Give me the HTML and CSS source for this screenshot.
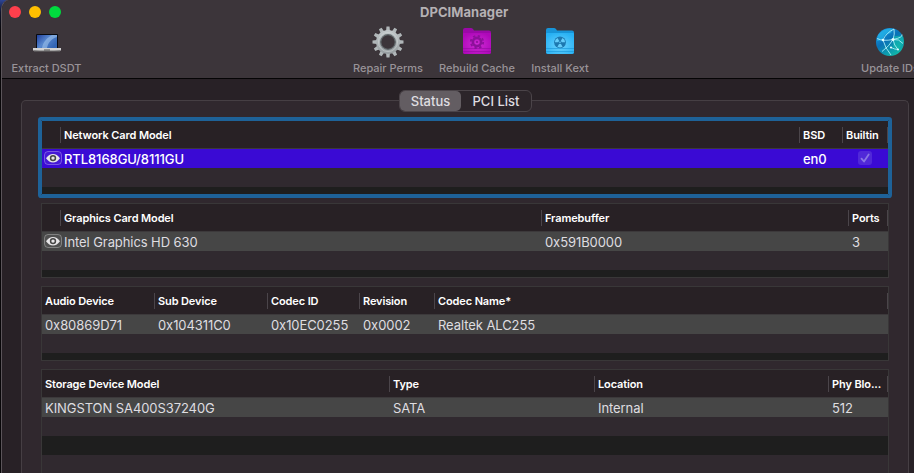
FILE: index.html
```html
<!DOCTYPE html>
<html lang="en">
<head>
<meta charset="utf-8">
<title>DPCIManager</title>
<link rel="stylesheet" href="styles.css">
</head>
<body>
<svg class="defs" aria-hidden="true">
  <symbol id="eye" viewBox="0 0 18 14">
    <rect x=".5" y=".5" width="17" height="13" rx="3.5" fill="#fff" fill-opacity=".06" stroke="#fff" stroke-opacity=".3"/>
    <path d="M2 7.200C4 4.300 6.300 2.900 9 2.900s5 1.400 7 4.300C14 10 11.700 11.400 9 11.400S4 10 2 7.200Z" fill="#e8e6e8"/>
    <circle cx="9" cy="7.100" r="3.200" class="eye-ring"/>
    <circle cx="9" cy="7.100" r="1.700" fill="#e8e6e8"/>
  </symbol>
</svg>
<div class="window">
  <header class="titlebar">
    <div class="lights"><i class="close"></i><i class="minimize"></i><i class="zoom"></i></div>
    <h1><span>DPCIManager</span></h1>
    <nav class="toolbar">
      <div class="tool extract">
        <svg width="30" height="30" viewBox="0 0 30 30">
          <defs><linearGradient id="screen" x1="0" y1="0" x2="1" y2=".6"><stop offset="0" stop-color="#203f9c"/><stop offset=".5" stop-color="#5787ce"/><stop offset="1" stop-color="#3265b5"/></linearGradient></defs>
          <rect x="4" y="7" width="22" height="15" rx="1" fill="#080a10"/>
          <rect x="5" y="8" width="20" height="13" fill="url(#screen)"/>
          <path d="M10 21C11 15 15 11 20 8h5v2c-6 2-9 6-10 11Z" fill="#a5c9ee" opacity=".55"/>
          <path d="M1 21h28v2.500q-14 1-28 0Z" fill="#d3d3d3"/><path d="M2 23.500h26v1H2Z" fill="#737273"/><path d="M12 22.500h6v1h-6Z" fill="#555"/>
        </svg>
        <span>Extract DSDT</span>
      </div>
      <div class="tool repair">
        <svg width="32" height="32" viewBox="0 0 32 32">
          <defs><linearGradient id="steel" x1="0" y1="0" x2="0" y2="1"><stop offset="0" stop-color="#c2c8ca"/><stop offset="1" stop-color="#969da0"/></linearGradient></defs>
          <g fill="#b0b6b8">
            <path d="M14 5 14.500.5h3L18 5v22l-.5 4.500h-3L14 27Z" transform="rotate(0 16 16)"/>
            <path d="M14 5 14.500.5h3L18 5v22l-.5 4.500h-3L14 27Z" transform="rotate(30 16 16)"/>
            <path d="M14 5 14.500.5h3L18 5v22l-.5 4.500h-3L14 27Z" transform="rotate(60 16 16)"/>
            <path d="M14 5 14.500.5h3L18 5v22l-.5 4.500h-3L14 27Z" transform="rotate(90 16 16)"/>
            <path d="M14 5 14.500.5h3L18 5v22l-.5 4.500h-3L14 27Z" transform="rotate(120 16 16)"/>
            <path d="M14 5 14.500.5h3L18 5v22l-.5 4.500h-3L14 27Z" transform="rotate(150 16 16)"/>
          </g>
          <circle cx="16" cy="16" r="12" fill="url(#steel)"/>
          <circle cx="16" cy="16" r="7.300" fill="#3c353a" stroke="#61686b" stroke-width="1.300"/>
          <circle cx="16" cy="16" r="9.600" fill="none" stroke="#d8dddd" stroke-width=".8" opacity=".6"/>
        </svg>
        <span>Repair Perms</span>
      </div>
      <div class="tool rebuild">
        <svg width="32" height="32" viewBox="0 0 32 32">
          <defs><radialGradient id="magenta" cx=".5" cy=".55" r=".6"><stop offset="0" stop-color="#cf2bd4"/><stop offset="1" stop-color="#ae08b9"/></radialGradient></defs>
          <path d="M2 4q0-2 2-2h6q1 0 2 1l1 1.500h15q2 0 2 2V26q0 2-2 2H4q-2 0-2-2Z" fill="#9b08a8"/>
          <path d="M2 8q0-1 1-1h26q1 0 1 1v18q0 2-2 2H4q-2 0-2-2Z" fill="url(#magenta)"/>
          <path d="M2 22.500h28M2 25.500h28" stroke="#900b9d" stroke-width=".6"/>
          <g fill="none" stroke="#8c109a"><circle cx="16" cy="16" r="4.100" stroke-width="2.600"/><circle cx="16" cy="16" r="6.200" stroke-width="1.800" stroke-dasharray="2.400 2.470"/></g>
          <circle cx="16" cy="16" r="1.100" fill="#8c109a"/>
        </svg>
        <span>Rebuild Cache</span>
      </div>
      <div class="tool install">
        <svg width="32" height="32" viewBox="0 0 32 32">
          <defs><radialGradient id="azure" cx=".5" cy=".6" r=".65"><stop offset="0" stop-color="#6bd3ff"/><stop offset="1" stop-color="#26b0f3"/></radialGradient></defs>
          <path d="M2 4q0-2 2-2h6q1 0 2 1l1 1.500h15q2 0 2 2V26q0 2-2 2H4q-2 0-2-2Z" fill="#1794d8"/>
          <path d="M2 8q0-1 1-1h26q1 0 1 1v18q0 2-2 2H4q-2 0-2-2Z" fill="url(#azure)"/>
          <path d="M2 22.500h28M2 25.500h28" stroke="#1593d6" stroke-width=".6"/>
          <circle cx="16" cy="16.300" r="5.900" fill="#1d78b0"/>
          <g fill="#67cdfa"><path d="M16 16.300 10.900 16.300A5.100 5.100 0 0 1 13.450 11.900Z"/><path d="M16 16.300 18.550 11.900A5.100 5.100 0 0 1 21.100 16.300Z"/><path d="M16 16.300 18.550 20.700A5.100 5.100 0 0 1 13.450 20.700Z"/></g>
          <circle cx="16" cy="16.300" r="1.600" fill="#1d78b0"/><circle cx="16" cy="16.300" r=".8" fill="#67cdfa"/>
        </svg>
        <span>Install Kext</span>
      </div>
      <div class="tool update">
        <svg width="32" height="32" viewBox="0 0 32 32">
          <defs><linearGradient id="globe" x1="0" y1="0" x2=".7" y2="1"><stop offset="0" stop-color="#1fa2ec"/><stop offset=".48" stop-color="#0871b7"/><stop offset="1" stop-color="#10b9a7"/></linearGradient></defs>
          <circle cx="16" cy="16" r="14" fill="url(#globe)"/>
          <path d="M4 9q7-8 15-6l-2 4-6 2-3 5-5 1Z" fill="#29c0ee" opacity=".6"/>
          <path d="M20 10l9 0 1 6-6 8-5-3Z" fill="#12c5ae" opacity=".5"/>
          <g fill="none" stroke="#baf8ff" stroke-width="1" opacity=".8"><path d="M3 12.500q6 3 16 1t9-5M9 14Q12 7 20 3M19 13.500Q21 8 20 3M9 14q2 8 8 15M19 13.500q-3 6-11 12M19 13.500q1 6 5 10M17 21.500q4 2 7 2M19 13.500q6-1 10 4"/></g>
          <g fill="#e2ffff"><circle cx="9" cy="14" r="1.300"/><circle cx="19" cy="13.500" r="1.500"/><circle cx="17" cy="21.500" r="1.100"/><circle cx="24" cy="23.500" r="1"/></g>
        </svg>
        <span>Update IDs</span>
      </div>
    </nav>
  </header>
  <main class="panel">
    <div class="tabs"><b class="active"><span>Status</span></b><b><span>PCI List</span></b></div>
    <section class="table network focused">
      <div class="row head"><div></div><div><span>Network Card Model</span></div><div><span>BSD</span></div><div><span>Builtin</span></div></div>
      <div class="row data"><div class="eye"><svg width="18" height="14"><use href="#eye"/></svg></div><div><span>RTL8168GU/8111GU</span></div><div><span>en0</span></div>
        <div class="check"><svg width="14" height="14" viewBox="0 0 14 14"><rect width="14" height="14" rx="3" fill="#5028d8"/><path d="M3.500 7.600 6 10.500l4.700-7" fill="none" stroke="#8a75e4" stroke-width="1.800" stroke-linecap="round" stroke-linejoin="round"/></svg></div></div>
    </section>
    <section class="table graphics">
      <div class="row head"><div></div><div><span>Graphics Card Model</span></div><div><span>Framebuffer</span></div><div><span>Ports</span></div></div>
      <div class="row data"><div class="eye"><svg width="18" height="14"><use href="#eye"/></svg></div><div><span>Intel Graphics HD 630</span></div><div><span>0x591B0000</span></div><div><span>3</span></div></div>
    </section>
    <section class="table audio">
      <div class="row head"><div><span>Audio Device</span></div><div><span>Sub Device</span></div><div><span>Codec ID</span></div><div><span>Revision</span></div><div><span>Codec Name*</span></div></div>
      <div class="row data"><div><span>0x80869D71</span></div><div><span>0x104311C0</span></div><div><span>0x10EC0255</span></div><div><span>0x0002</span></div><div><span>Realtek ALC255</span></div></div>
    </section>
    <section class="table storage">
      <div class="row head"><div><span>Storage Device Model</span></div><div><span>Type</span></div><div><span>Location</span></div><div><span>Phy Blo...</span></div></div>
      <div class="row data"><div><span>KINGSTON SA400S37240G</span></div><div><span>SATA</span></div><div><span>Internal</span></div><div><span>512</span></div></div>
    </section>
  </main>
</div>
</body>
</html>
```

FILE: styles.css
```css
* { box-sizing: border-box; }
html, body { margin: 0; height: 100%; overflow: hidden; }
body {
  padding-left: 1px;
  background: linear-gradient(#2d4596 0, #10142c 12px, #080608 30px);
  font-family: Inter, "Liberation Sans", sans-serif;
  color: #dfdde0;
}
.defs { position: absolute; width: 0; height: 0; }
.window {
  display: flex;
  flex-direction: column;
  width: 925px;
  height: 474px;
  border: 1px solid #5b555a;
  border-top-color: #4e474c;
  border-bottom: 0;
  border-radius: 10px 10px 0 0;
  background: #282126;
  overflow: hidden;
  margin-top: -1px;
}
.titlebar {
  flex: none;
  display: grid;
  grid-template-columns: 100px 724px;
  grid-template-rows: 24px 54px;
  height: 79px;
  background: #3c353a;
  border-bottom: 1px solid #050405;
}
.lights { display: flex; gap: 8px; padding: 6px 0 0 7px; }
.lights i { width: 12px; height: 12px; border-radius: 50%; }
.close { background: #ff3f4c; }
.minimize { background: #ffbf00; }
.zoom { background: #00db3e; }
h1 {
  margin: 0;
  padding-left: 318px;
  font-size: 13px;
  line-height: 24px;
  font-weight: 700;
  letter-spacing: .06px;
  color: #b5b1b4;
}
.toolbar {
  grid-column: 1 / 3;
  width: 960px;
  display: grid;
  grid-template-columns: 89px 250px 94px 84px 82px 244px 90px;
  grid-template-areas: "extract . repair rebuild install . update";
}
.extract { grid-area: extract; }
.repair { grid-area: repair; }
.rebuild { grid-area: rebuild; }
.install { grid-area: install; }
.update { grid-area: update; }
.tool {
  display: flex;
  flex-direction: column;
  align-items: center;
  height: 54px;
  padding-top: 2px;
  font-size: 11px;
  line-height: 14px;
  font-weight: 500;
  color: #999398;
}
.tool svg { flex: none; height: 32px; margin-bottom: 3px; }
.tool span, .row span, .tabs span, h1 span { white-space: nowrap; }
.panel {
  flex: 1;
  min-height: 0;
  display: flex;
  flex-direction: column;
  gap: 8px;
  width: 888px;
  margin: 21px 0 0 19px;
  padding: 0 19px;
  border: 1px solid #463f44;
  border-bottom: 0;
  border-radius: 5px 5px 0 0;
  background: #30282e;
}
.tabs {
  display: flex;
  flex: none;
  align-self: center;
  width: 133px;
  height: 22px;
  margin: -11px -1px 0 0;
  border: 1px solid #4b4449;
  border-radius: 6px;
  background: #2c252a;
  font-size: 13px;
  line-height: 20px;
}
.tabs b { width: 70px; text-align: center; font-weight: 500; }
.tabs .active { width: 61px; border-radius: 5px; background: #635d62; }
.table {
  flex: none;
  width: 848px;
  height: 75px;
  border: 1px solid #393738;
  background: linear-gradient(#30292f 66px, #1e1e1e 66px);
}
.focused { border-color: #1e6298; box-shadow: 0 0 0 3px #1e6298; border-radius: 1px; }
.row { display: grid; }
.network .row { grid-template-columns: 19px 739px 43px 45px; }
.graphics .row { grid-template-columns: 19px 481px 307px 39px; }
.audio .row { grid-template-columns: 113px 113px 92px 75px 453px; }
.storage .row { grid-template-columns: 348px 205px 234px 59px; }
.row > div { padding-left: 3px; min-width: 0; }
.head {
  height: 28px;
  border-bottom: 1px solid #3c393b;
  background: #282125;
  color: #fff;
  font-size: 11px;
  line-height: 16px;
  font-weight: 600;
  letter-spacing: -.12px;
  padding-top: 6px;
}
.head > div { height: 16px; border-right: 1px solid #4b454a; }
.data {
  height: 19px;
  background: #464646;
  font-size: 13px;
  line-height: 20px;
  letter-spacing: -.08px;
}
.network .data { background: #3a0ad4; color: #fff; font-weight: 500; }
.row > .eye { padding-left: 2px; }
.eye svg { display: block; margin-top: 2px; }
.eye-ring { fill: #464646; }
.network .eye-ring { fill: #3a0ad4; }
.row > .check { padding: 2px 0 0 15px; }
.check svg { display: block; }
.storage {
  flex: 1;
  min-height: 0;
  border-bottom: 0;
  background: linear-gradient(#30292f 66px, #1e1e1e 66px 85px, #30292f 85px);
}
```
